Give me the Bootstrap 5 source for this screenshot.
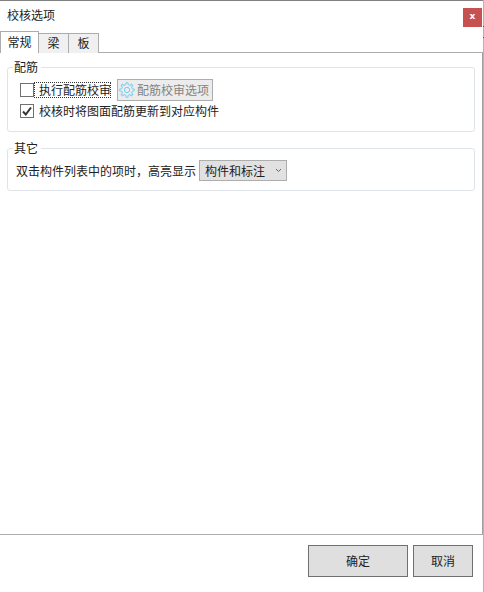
<!DOCTYPE html>
<html lang="zh">
<head>
<meta charset="utf-8">
<title>校核选项</title>
<link href="https://cdn.jsdelivr.net/npm/bootstrap@5.3.0/dist/css/bootstrap.min.css" rel="stylesheet">
<style>
html,body{margin:0;height:592px;overflow:hidden;background:#fff}
body{font-family:"Noto Sans CJK SC","Liberation Sans",sans-serif;font-size:12px;line-height:16px;color:#222}
.dlg{width:483px;height:592px;border-top:1px solid #808080;background:#fff;flex:none}
.edgeln{width:1px;height:592px;flex:none;background:linear-gradient(#b4b4b4 0 26px,#555 26px 27px,#b4b4b4 27px 37px,#555 37px 38px,#b4b4b4 38px)}
.titlebar{height:31px;padding:7px 1px 0 7px}
.ttl{margin-top:-1px}
.closex{width:19px;height:19px;background:#c75050;color:#fff;font:bold 9px/17px "DejaVu Sans",sans-serif;text-align:center}
.tabstrip{height:21px;border-bottom:1px solid #acacac}
.tabx{height:20px;margin-top:1px;padding-top:1px;background:#f0f0f0;border:1px solid #acacac;border-bottom:0;text-align:center;margin-left:-1px;width:31px}
.tabx.on{height:22px;width:39px;margin-top:-1px;margin-left:0;padding-top:2px;background:#fff;position:relative;z-index:1}
.tabbody{height:481px;padding:14px 0 0 7px;border-right:1px solid #a0a0a0}
.grp{border:1px solid #dee4e9;border-radius:3px;position:relative;width:468px}
.grp1{height:65px;padding:11px 12px 0 12px;margin-bottom:16px}
.grp2{height:43px;padding:11px 7px 0 8px}
.lgd{position:absolute;left:5px;top:-9px;background:#fff;padding:0 3px 0 1px}
.chk{width:14px;height:14px;border:1px solid #707070;background:#fff;flex:none;display:flex;align-items:center;justify-content:center}
.focusb{border:1px dotted #333;padding-left:4px;line-height:14px;height:16px;width:77px;white-space:nowrap;overflow:hidden}
.optbtn{width:96px;height:22px;background:#ececec;border:1px solid #adadad;color:#838383;padding-left:1px;margin-left:6px}
.optbtn svg{margin-right:2px;flex:none}
.rowa{height:22px}
.rowb{height:19px}
.rowtxt{margin-left:5px}
.combo{width:88px;height:21px;background:#e1e1e1;border:1px solid #adadad;padding:0 4px 0 5px;margin-left:3px}
.ftr{height:58px;border-top:1px solid #acacac;padding:10px 10px 0 0;gap:5px}
.fbtn{height:32px;background:#dfdfdf;border:1px solid #707070;display:flex;align-items:center;justify-content:center;color:#222}
.w1{width:100px}.w2{width:60px}
</style>
</head>
<body>
<div class="d-flex">
<div class="dlg d-flex flex-column">
  <div class="titlebar d-flex justify-content-between align-items-start">
    <span class="ttl">校核选项</span>
    <div class="closex">x</div>
  </div>
  <div class="tabstrip d-flex">
    <div class="tabx on">常规</div>
    <div class="tabx">梁</div>
    <div class="tabx">板</div>
  </div>
  <div class="tabbody">
    <div class="grp grp1">
      <span class="lgd">配筋</span>
      <div class="rowa d-flex align-items-center">
        <span class="chk"></span>
        <span class="focusb">执行配筋校审</span>
        <div class="optbtn d-flex align-items-center">
          <svg width="16" height="16" viewBox="0 0 24 24" fill="none" stroke="#78d0f2" stroke-width="1.500" stroke-linejoin="round">
            <circle cx="12" cy="12" r="4"/>
            <polyline points="10.300,3.980 10.470,1.110 13.530,1.110 13.700,3.980 16.470,5.130"/>
            <polyline points="10.300,3.980 10.470,1.110 13.530,1.110 13.700,3.980 16.470,5.130" transform="rotate(45 12 12)"/>
            <polyline points="10.300,3.980 10.470,1.110 13.530,1.110 13.700,3.980 16.470,5.130" transform="rotate(90 12 12)"/>
            <polyline points="10.300,3.980 10.470,1.110 13.530,1.110 13.700,3.980 16.470,5.130" transform="rotate(135 12 12)"/>
            <polyline points="10.300,3.980 10.470,1.110 13.530,1.110 13.700,3.980 16.470,5.130" transform="rotate(180 12 12)"/>
            <polyline points="10.300,3.980 10.470,1.110 13.530,1.110 13.700,3.980 16.470,5.130" transform="rotate(225 12 12)"/>
            <polyline points="10.300,3.980 10.470,1.110 13.530,1.110 13.700,3.980 16.470,5.130" transform="rotate(270 12 12)"/>
            <polyline points="10.300,3.980 10.470,1.110 13.530,1.110 13.700,3.980 16.470,5.130" transform="rotate(315 12 12)"/>
          </svg>
          <span>配筋校审选项</span>
        </div>
      </div>
      <div class="rowb d-flex align-items-center">
        <span class="chk"><svg width="12" height="12" viewBox="0 0 12 12"><path d="M2 6.500l2.800 3L10 2.500" fill="none" stroke="#333" stroke-width="2"/></svg></span>
        <span class="rowtxt">校核时将图面配筋更新到对应构件</span>
      </div>
    </div>
    <div class="grp grp2">
      <span class="lgd">其它</span>
      <div class="d-flex align-items-center">
        <span>双击构件列表中的项时，高亮显示</span>
        <div class="combo d-flex align-items-center justify-content-between">
          <span>构件和标注</span>
          <svg width="7" height="5" viewBox="0 0 7 5"><path d="M1 1l2.500 2.500L6 1" fill="none" stroke="#666"/></svg>
        </div>
      </div>
    </div>
  </div>
  <div class="ftr d-flex justify-content-end">
    <div class="fbtn w1">确定</div>
    <div class="fbtn w2">取消</div>
  </div>
</div>
<div class="edgeln"></div>
</div>
</body>
</html>
